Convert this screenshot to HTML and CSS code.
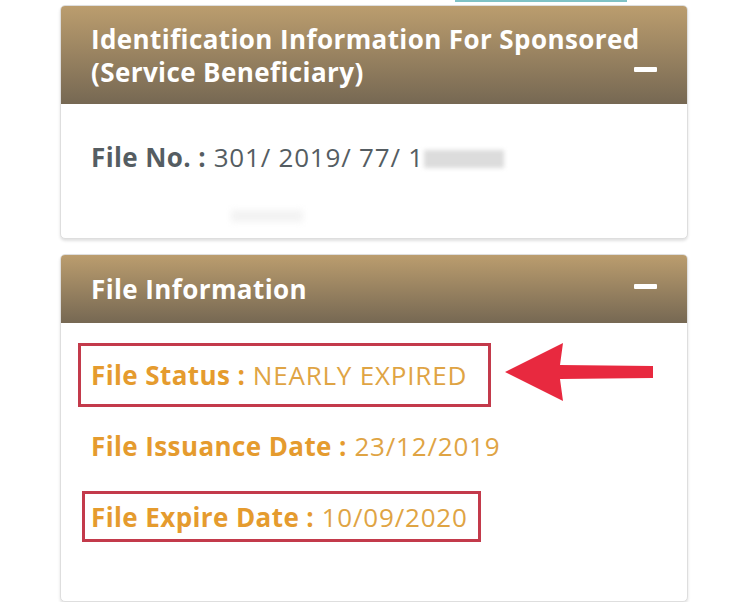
FILE: index.html
```html
<!DOCTYPE html>
<html>
<head>
<meta charset="utf-8">
<link rel="stylesheet" href="styles.css">
</head>
<body>
<div class="topbar"></div>
<div class="page">
  <section class="card">
    <header class="card-head tall">
      <h2 class="card-title">Identification Information For Sponsored<br>(Service Beneficiary)</h2>
      <span class="toggle"></span>
    </header>
    <div class="card-body first">
      <p class="row grey"><b>File No. :</b> 301/ 2019/ 77/ 1<span class="blur"></span></p>
      <span class="blur2"></span>
    </div>
  </section>
  <section class="card">
    <header class="card-head">
      <h2 class="card-title">File Information</h2>
      <span class="toggle"></span>
    </header>
    <div class="card-body second">
      <div class="row-wrap status">
        <p class="row orange boxed box1"><b>File Status :</b> NEARLY EXPIRED</p>
        <svg class="arrow" width="150" height="62" viewBox="0 0 150 62">
          <polygon points="0,31 58,2 55,24 148,25 148,37 55,38 58,60" fill="#e8293f"/>
        </svg>
      </div>
      <p class="row orange issu"><b>File Issuance Date :</b> 23/12/2019</p>
      <p class="row orange boxed box2"><b>File Expire Date :</b> 10/09/2020</p>
    </div>
  </section>
</div>
</body>
</html>
```
FILE: styles.css
```css
* { box-sizing: border-box; }
html, body { margin: 0; padding: 0; background: #fff; }
body { font-family: "Open Sans", Lato, sans-serif; position: relative; }
.topbar { position: absolute; left: 455px; top: 0; width: 172px; height: 2px; background: #7fc2c6; }
.page { padding: 5px 0 0 60px; width: 688px; display: flex; flex-direction: column; gap: 15px; }
.card { border: 1px solid #dedede; border-radius: 5px; overflow: hidden; box-shadow: 0 2px 3px rgba(0,0,0,0.12); background: #fff; }
.card-head { background: linear-gradient(#bb9d6e, #766853); display: flex; align-items: center; justify-content: space-between; padding: 0 30px 0 30px; height: 68px; }
.card-head.tall { height: 98px; align-items: flex-start; padding-top: 17px; }
.card-title { margin: 0; flex: 1; min-width: 0; white-space: nowrap; color: #fff; font-size: 26px; line-height: 33px; font-weight: 700; letter-spacing: 0.4px; }
.toggle { flex-shrink: 0; width: 23px; height: 5px; background: #fff; border-radius: 1px; }
.card-head.tall .toggle { margin-top: 44px; }
.card-head:not(.tall) .toggle { margin-top: -5px; }
.card-body { position: relative; padding: 0 30px; }
.card-body.first { height: 134px; padding-top: 38px; }
.card-body.second { height: 278px; padding-top: 20px; }
.row { margin: 0; font-size: 26px; line-height: 30px; white-space: nowrap; letter-spacing: 0.8px; }
.row b { font-weight: 700; letter-spacing: 0.4px; }
.grey { color: #555d62; }
.orange { color: #dfa444; }
.orange b { color: #e59b2e; }
.blur { display: inline-block; width: 80px; height: 18px; background: #dcdcdc; filter: blur(2px); vertical-align: -1px; }
.blur2 { position: absolute; left: 170px; top: 106px; width: 72px; height: 12px; background: #f3f3f3; filter: blur(3px); }
.row-wrap { display: flex; align-items: center; }
.boxed { border: 3px solid #c33a4b; display: inline-block; }
.box1 { margin-left: -13px; padding: 14px 8px 14px 10px; width: 413px; }
.arrow { margin-left: 14px; margin-top: -6px; }
.issu { margin-top: 24px; }
.box2 { margin-left: -9px; margin-top: 30px; padding: 8px 6px 7px 6px; width: 399px; }
```
